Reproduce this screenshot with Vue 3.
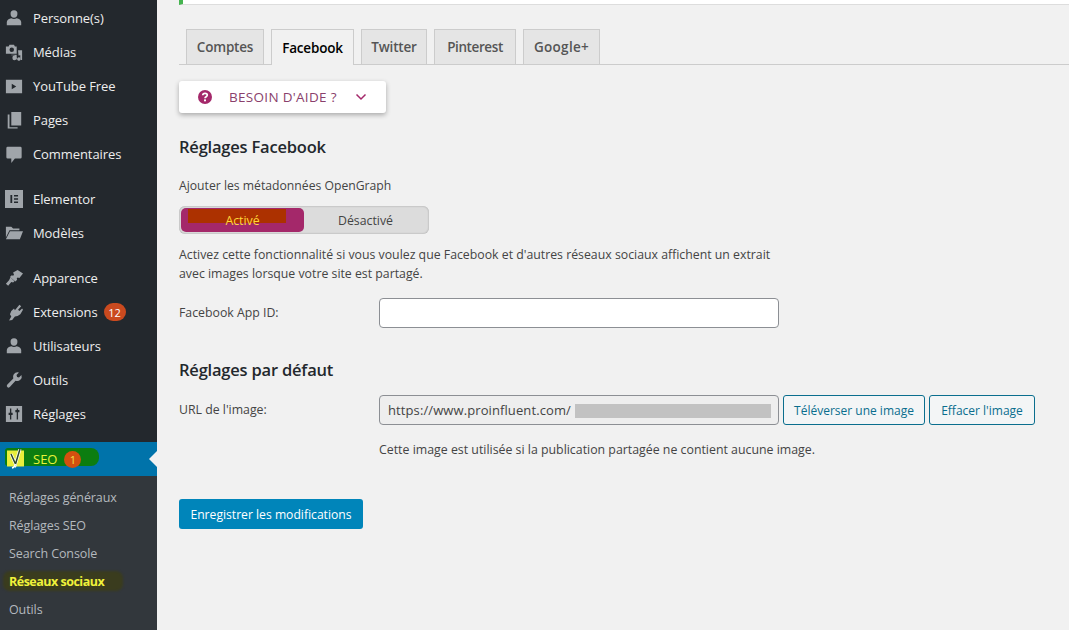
<script setup>
const groups = [
  [
    { label: 'Personne(s)', icon: 'user' },
    { label: 'Médias', icon: 'media' },
    { label: 'YouTube Free', icon: 'video' },
    { label: 'Pages', icon: 'pages' },
    { label: 'Commentaires', icon: 'comment' }
  ],
  [
    { label: 'Elementor', icon: 'elementor' },
    { label: 'Modèles', icon: 'folder' }
  ],
  [
    { label: 'Apparence', icon: 'brush' },
    { label: 'Extensions', icon: 'plug', badge: '12' },
    { label: 'Utilisateurs', icon: 'user' },
    { label: 'Outils', icon: 'wrench' },
    { label: 'Réglages', icon: 'sliders' }
  ]
]
const icons = {
  user: 'M10 1.500a3.800 3.800 0 0 1 3.800 4c0 2.300-1.500 4.300-3.800 4.300S6.200 7.800 6.200 5.500A3.800 3.800 0 0 1 10 1.500zM2 18v-3.500c0-2.200 2.400-3.700 5-4.200 1.800 1 4.200 1 6 0 2.600.5 5 2 5 4.200V18z',
  media: 'M1 4h3l1-2h5l1 2h2v8H1zM7.500 5a2.500 2.500 0 1 0 0 5 2.500 2.500 0 0 0 0-5zM14.500 8H19v11h-2v-5.500l-2 .5zM7 13h6v2.500a2.500 2.500 0 1 1-2-1.500v-.500H7zM14.500 16a2 2 0 1 1 0 3.500 2 2 0 0 1 0-3.500z',
  video: 'M1 3h18v15H1zM7.500 7.500v6l5-3z',
  pages: 'M7 1h11v15H7zM5 4v14h9v1.500H3V4z',
  comment: 'M3 2h14a1.500 1.500 0 0 1 1.500 1.500v10A1.500 1.500 0 0 1 17 15h-6l-4 5v-5H3a1.500 1.500 0 0 1-1.500-1.500v-10A1.500 1.500 0 0 1 3 2z',
  elementor: 'M0 0h20v20H0zM6 5.500v9h2v-9zM10 5.500v1.800h4.500V5.500zM10 9.100v1.800h4.500V9.100zM10 12.700v1.800h4.500v-1.800z',
  folder: 'M1 3h6l2 2h7v2H5L1 15zM5.500 8H20l-3.500 9H1z',
  brush: 'M14 1l6 4-4 5-2-.5-1 1 .5 1.500-2 2-6-5 2-2 1.500.5 1-1L9 4zM6 9.500l4.500 4-1.500 1.500-2-.5-3.500 4-2.500-2 3.500-4z',
  plug: 'M16 2l2 1.500-3.500 4 1.500 1.500 3-3 1 1.500-3 5-3 2-3 .5-3 4-3.500.5 2.500-4.500-1.500-2.500 1.500-3.500 3-3 1 2z',
  wrench: 'M14 1.500a4.800 4.800 0 0 1 1.500.2L12.800 4.500l.6 2.100 2.100.6L18.300 4.500a5 5 0 0 1-6.600 6.300L5.600 17.600a2 2 0 0 1-3.200-2.400L9.200 8.300A5 5 0 0 1 14 1.500z',
  sliders: 'M1 1h18v18H1zM5.500 4v4.500H4V11h1.500v5h1.500v-5h1.500V8.500H7V4zM13 4v1.500h-1.500V8H13v8h1.500V8H16V5.500h-1.500V4z'
}
const tabs = ['Comptes', 'Facebook', 'Twitter', 'Pinterest', 'Google+']
const subs = ['Réglages généraux', 'Réglages SEO', 'Search Console', 'Réseaux sociaux', 'Outils']
</script>

<template>
  <div class="page">
    <aside class="side">
      <div v-for="(g, i) in groups" :key="i" class="group">
        <div v-for="it in g" :key="it.label" class="item">
          <svg class="ico" viewBox="0 0 20 20"><path :d="icons[it.icon]" fill-rule="evenodd" /></svg>
          <span>{{ it.label }}</span>
          <span v-if="it.badge" class="badge">{{ it.badge }}</span>
        </div>
      </div>
      <div class="seo">
        <span class="seo-mark"></span>
        <svg class="yoast" viewBox="0 0 20 20">
          <rect x="2" y="1.500" width="17" height="16" fill="#e8ee3c" />
          <path d="M6 5l4.500 10L15 0" fill="none" stroke="#fff" stroke-width="3" />
          <path d="M6 5l4.500 10L15 0" fill="none" stroke="#2d4a2a" stroke-width="1.500" />
          <path d="M10.500 15c-.5 2.500-1.500 3.500-3.500 4" fill="none" stroke="#fff" stroke-width="1.300" />
        </svg>
        <span class="seo-label">SEO</span>
        <span class="seo-badge">1</span>
        <span class="arrow"></span>
      </div>
      <div class="subs">
        <div v-for="s in subs" :key="s" class="sub" :class="{ cur: s === 'Réseaux sociaux' }">
          <span class="sub-mark" v-if="s === 'Réseaux sociaux'"></span>
          <span class="sub-text">{{ s }}</span>
        </div>
      </div>
    </aside>

    <main class="main">
      <div class="notice"></div>
      <nav class="tabs">
        <span v-for="t in tabs" :key="t" class="tab" :class="{ active: t === 'Facebook' }">{{ t }}</span>
      </nav>

      <div class="help">
        <svg class="q" viewBox="0 0 16 16">
          <circle cx="8" cy="8" r="7" fill="#a4286a" />
          <path d="M5.700 6.200C5.800 4.900 6.800 4.300 8 4.300c1.300 0 2.300.7 2.300 1.800 0 1.700-2.300 1.600-2.300 3.200" fill="none" stroke="#fff" stroke-width="1.700" />
          <rect x="7" y="10.400" width="2" height="1.900" fill="#fff" />
        </svg>
        <span class="help-text">BESOIN D'AIDE ?</span>
        <svg class="chev" viewBox="0 0 12 8"><path d="M1.500 1.500L6 6l4.500-4.500" fill="none" stroke="#a4286a" stroke-width="1.500" /></svg>
      </div>

      <h2 class="h1">Réglages Facebook</h2>
      <p class="lbl">Ajouter les métadonnées OpenGraph</p>
      <div class="toggle">
        <span class="on"><i class="scribble"></i><b>Activé</b></span>
        <span class="off">Désactivé</span>
      </div>
      <p class="desc">Activez cette fonctionnalité si vous voulez que Facebook et d'autres réseaux sociaux affichent un extrait<br />avec images lorsque votre site est partagé.</p>
      <div class="row r-app">
        <label class="key">Facebook App ID:</label>
        <div class="input"></div>
      </div>

      <h2 class="h2">Réglages par défaut</h2>
      <div class="row r-url">
        <label class="key">URL de l'image:</label>
        <div class="input ro"><span>https://www.proinfluent.com/</span><i class="blur"></i></div>
        <span class="btn">Téléverser une image</span>
        <span class="btn b2">Effacer l'image</span>
      </div>
      <p class="note">Cette image est utilisée si la publication partagée ne contient aucune image.</p>
      <span class="save">Enregistrer les modifications</span>
    </main>
  </div>
</template>

<style>
html, body { margin: 0; height: 100%; overflow: hidden; background: #f1f1f1; }
</style>

<style scoped>
.page { display: flex; width: 1069px; height: 630px; overflow: hidden; font-family: "Open Sans", "Noto Sans", sans-serif; font-size: 12px; color: #444; background: #f1f1f1; }
.side { width: 157px; flex: none; background: #23282d; padding-top: 1px; box-sizing: border-box; }
.group { margin-bottom: 11px; }
.item { height: 34px; display: flex; align-items: center; color: #eee; font-size: 13px; letter-spacing: -.08px; }
.ico { width: 18px; height: 18px; margin: 0 10px 0 5px; flex: none; fill: #a0a5aa; }
.badge { margin-left: 6px; width: 22px; height: 18px; border-radius: 9px; background: #ca4a1f; color: #fff; font-size: 11px; letter-spacing: 0; display: flex; align-items: center; justify-content: center; }
.seo { position: relative; height: 34px; background: #0073aa; display: flex; align-items: center; color: #e9f23a; font-size: 13px; }
.seo-mark { position: absolute; left: 5px; top: 6px; width: 94px; height: 18px; background: #0c7d10; border-radius: 3px 8px 8px 3px; }
.yoast { position: relative; width: 20px; height: 20px; margin-left: 5px; flex: none; }
.seo-label { position: relative; margin-left: 8px; }
.seo-badge { position: relative; width: 17px; height: 17px; margin-left: 7px; border-radius: 50%; background: #d4500f; color: #f3e04a; font-size: 11px; display: flex; align-items: center; justify-content: center; }
.arrow { position: absolute; right: 0; top: 9px; border: 8px solid transparent; border-right-color: #f1f1f1; border-left: 0; }
.subs { background: #32373c; padding-top: 7px; height: 160px; box-sizing: border-box; }
.sub { position: relative; height: 28px; display: flex; align-items: center; padding-left: 9px; color: #b4b9be; font-size: 12.500px; letter-spacing: -.1px; }
.sub.cur { color: #f0f23a; font-weight: 700; letter-spacing: -.5px; }
.sub-mark { position: absolute; left: 3px; top: 4px; width: 120px; height: 20px; background: #3a3c1e; border-radius: 7px; filter: blur(1px); }
.sub-text { position: relative; }
.main { flex: 1; min-width: 0; padding-left: 22px; display: flex; flex-direction: column; align-items: flex-start; }
.notice { align-self: stretch; height: 5px; box-sizing: border-box; background: #fff; border-left: 4px solid #46b450; border-bottom: 1px solid #ddd; }
.tabs { align-self: stretch; margin-top: 24px; height: 36px; box-sizing: border-box; border-bottom: 1px solid #ccc; padding-left: 7px; display: flex; gap: 7px; }
.tab { height: 35px; box-sizing: border-box; display: flex; align-items: center; justify-content: center; background: #e5e5e5; border: 1px solid #ccc; border-bottom: 0; color: #555; font-size: 13.500px; font-weight: 600; letter-spacing: -.2px; }
.tab:nth-child(1) { width: 78px; }
.tab:nth-child(2) { width: 83px; }
.tab:nth-child(3) { width: 66px; }
.tab:nth-child(4) { width: 82px; letter-spacing: -.4px; }
.tab:nth-child(5) { width: 77px; letter-spacing: .3px; }
.tab.active { background: #f1f1f1; color: #000; height: 36px; }
.help { margin-top: 16px; width: 207px; height: 32px; flex: none; background: #fff; border-radius: 3px; box-shadow: 0 2px 5px rgba(0,0,0,.3); display: flex; align-items: center; }
.q { width: 16px; height: 16px; margin-left: 18px; }
.help-text { margin-left: 16px; font-size: 13.500px; color: #8a3f6c; letter-spacing: .3px; white-space: nowrap; }
.chev { width: 12px; height: 8px; margin-left: 18px; }
.h1, .h2 { margin: 0; font-size: 16.500px; font-weight: 600; color: #23282d; letter-spacing: -.2px; line-height: 24px; }
.h1 { margin-top: 22px; }
.h2 { margin-top: 30px; }
.lbl { margin: 18px 0 0; font-size: 12.200px; line-height: 18px; color: #444; }
.toggle { margin-top: 11px; flex: none; width: 250px; height: 28px; background: #dcdcdc; border-radius: 6px; box-shadow: inset 0 0 2px rgba(0,0,0,.3); display: flex; box-sizing: border-box; padding: 2px; }
.on { position: relative; width: 123px; background: #a4286a; border-radius: 5px; display: flex; align-items: center; justify-content: center; color: #ffd83a; font-size: 12.300px; }
.on b { position: relative; font-weight: 400; }
.scribble { position: absolute; left: 7px; top: 1px; width: 98px; height: 14px; background: #ac3100; }
.off { flex: 1; display: flex; align-items: center; justify-content: center; font-size: 12.300px; color: #444; }
.desc { margin: 11px 0 0; font-size: 12.300px; line-height: 19px; color: #444; white-space: nowrap; }
.row { align-self: stretch; display: flex; align-items: center; }
.r-app { margin-top: 15px; }
.r-url { margin-top: 13px; }
.key { width: 200px; flex: none; font-size: 12.300px; color: #444; padding-bottom: 2px; }
.input { width: 400px; height: 30px; flex: none; box-sizing: border-box; background: #fff; border: 1px solid #8c8f94; border-radius: 4px; display: flex; align-items: center; padding-left: 8px; font-size: 13px; letter-spacing: .1px; color: #444; }
.input.ro { background: #eee; position: relative; }
.blur { position: absolute; left: 195px; top: 8px; width: 196px; height: 14px; background: #c2c2c2; }
.btn { width: 142px; height: 30px; flex: none; box-sizing: border-box; margin-left: 4px; border: 1px solid #0a6e8e; border-radius: 3px; background: #f3f5f6; color: #0a6e8e; font-size: 12px; display: flex; align-items: center; justify-content: center; }
.b2 { width: 106px; }
.note { margin: 16px 0 0 200px; font-size: 12.350px; line-height: 18px; color: #444; white-space: nowrap; }
.save { margin-top: 40px; width: 184px; height: 30px; flex: none; background: #0085ba; border-radius: 3px; color: #fff; font-size: 12.150px; display: flex; align-items: center; justify-content: center; }
</style>
